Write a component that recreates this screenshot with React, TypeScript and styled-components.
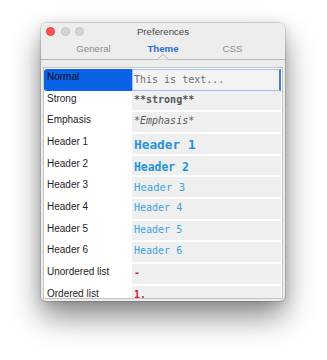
import React from "react";
import styled, { createGlobalStyle, css } from "styled-components";

const Global = createGlobalStyle`
  html, body { margin: 0; padding: 0; background: #ffffff; }
  body { font-family: "Liberation Sans", Arial, sans-serif; }
`;

const Page = styled.div`
  width: 327px;
  height: 360px;
  padding: 23px 0 0 41px;
  box-sizing: border-box;
`;

const Window = styled.div`
  width: 244px;
  height: 278px;
  border-radius: 5px;
  background: #ececec;
  display: flex;
  flex-direction: column;
  overflow: hidden;
  box-shadow: 0 16px 30px rgba(0, 0, 0, 0.45), 0 2px 12px rgba(0, 0, 0, 0.14),
    0 0 0 0.5px rgba(0, 0, 0, 0.22);
`;

const TitleBar = styled.div`
  height: 17px;
  display: grid;
  grid-template-columns: 1fr auto 1fr;
  align-items: center;
  background: #ededed;
`;

const Lights = styled.div`
  display: flex;
  gap: 5.5px;
  padding-left: 5px;
`;

const Light = styled.span<{ $color: string; $edge: string }>`
  width: 9px;
  height: 9px;
  border-radius: 50%;
  box-sizing: border-box;
  background: ${(p) => p.$color};
  border: 0.5px solid ${(p) => p.$edge};
`;

const Title = styled.div`
  font-size: 9.7px;
  color: #4a4a4a;
  line-height: 17px;
`;

const TabBar = styled.div`
  height: 19px;
  display: flex;
  justify-content: center;
  border-bottom: 1px solid #b9b9b9;
  background: #ededed;
`;

const Tab = styled.div<{ $active?: boolean }>`
  position: relative;
  width: 69.5px;
  text-align: center;
  font-size: 9.7px;
  line-height: 17px;
  color: #8c8c8c;
  ${(p) =>
    p.$active &&
    css`
      color: #2b6ccf;
      font-weight: bold;
    `}
`;

const Caret = styled.svg`
  position: absolute;
  left: 50%;
  bottom: -1px;
  margin-left: -6px;
  display: block;
`;

const Content = styled.div`
  flex: 1;
  padding: 7px 2px 2px 2px;
  display: flex;
  min-height: 0;
`;

const Frame = styled.div`
  flex: 1;
  border: 1px solid #c4c4c4;
  background: #ffffff;
  overflow: hidden;
  padding: 1px 1px 0 0;
`;

const Row = styled.div`
  display: grid;
  grid-template-columns: 88px 1fr;
  height: 21.67px;
`;

const Label = styled.div<{ $selected?: boolean }>`
  font-size: 10px;
  line-height: 15px;
  padding-left: 3px;
  color: #1e1e1e;
  white-space: nowrap;
  ${(p) =>
    p.$selected &&
    css`
      background: #0a62e6;
      border-radius: 3px 0 0 3px;
      color: #0c0c1c;
    `}
`;

type Kind =
  | "normal"
  | "strong"
  | "em"
  | "h1"
  | "h2"
  | "h3"
  | "h4"
  | "list";

const kindStyles: Record<Kind, ReturnType<typeof css>> = {
  normal: css`
    color: #6e6e6e;
    line-height: 15px;
  `,
  strong: css`
    color: #565656;
    font-weight: bold;
  `,
  em: css`
    color: #5a5a5a;
    font-style: italic;
  `,
  h1: css`
    color: #1f93de;
    font-weight: bold;
    font-size: 12.8px;
    line-height: 22px;
  `,
  h2: css`
    color: #1f93de;
    font-weight: bold;
    font-size: 11.4px;
    line-height: 22px;
  `,
  h3: css`
    color: #38a2e2;
    font-size: 10.6px;
    line-height: 20.5px;
  `,
  h4: css`
    color: #3aa3e2;
  `,
  list: css`
    color: #c8282c;
    font-weight: bold;
    line-height: 18px;
  `,
};

const Value = styled.div<{ $kind: Kind; $focused?: boolean }>`
  background: #efefef;
  border-bottom: 2px solid #ffffff;
  padding-left: 2px;
  overflow: hidden;
  white-space: nowrap;
  font-family: "DejaVu Sans Mono", "Liberation Mono", monospace;
  font-size: 10px;
  line-height: 17px;
  box-sizing: border-box;
  ${(p) => kindStyles[p.$kind]}
  ${(p) =>
    p.$focused &&
    css`
      background: #f3f3f3;
      border: 1px solid #9dbfec;
      border-right: 2px solid #3b7fdc;
      padding-left: 1px;
      padding-top: 2px;
    `}
`;

const rows: { label: string; text: string; kind: Kind }[] = [
  { label: "Normal", text: "This is text...", kind: "normal" },
  { label: "Strong", text: "**strong**", kind: "strong" },
  { label: "Emphasis", text: "*Emphasis*", kind: "em" },
  { label: "Header 1", text: "Header 1", kind: "h1" },
  { label: "Header 2", text: "Header 2", kind: "h2" },
  { label: "Header 3", text: "Header 3", kind: "h3" },
  { label: "Header 4", text: "Header 4", kind: "h4" },
  { label: "Header 5", text: "Header 5", kind: "h4" },
  { label: "Header 6", text: "Header 6", kind: "h4" },
  { label: "Unordered list", text: "-", kind: "list" },
  { label: "Ordered list", text: "1.", kind: "list" },
];

export default function App() {
  return (
    <Page>
      <Global />
      <Window>
        <TitleBar>
          <Lights>
            <Light $color="#fc5753" $edge="#de3f3b" />
            <Light $color="#d3d3d3" $edge="#c4c4c4" />
            <Light $color="#d3d3d3" $edge="#c4c4c4" />
          </Lights>
          <Title>Preferences</Title>
          <div />
        </TitleBar>
        <TabBar>
          <Tab>General</Tab>
          <Tab $active>
            Theme
            <Caret width="12" height="6" viewBox="0 0 12 6">
              <polygon points="0,5.5 6,0.5 12,5.5" fill="#ededed" />
              <polyline
                points="0,5.5 6,0.5 12,5.5"
                fill="none"
                stroke="#b9b9b9"
                strokeWidth="1"
              />
            </Caret>
          </Tab>
          <Tab>CSS</Tab>
        </TabBar>
        <Content>
          <Frame>
            {rows.map((r, i) => (
              <Row key={r.label}>
                <Label $selected={i === 0}>{r.label}</Label>
                <Value $kind={r.kind} $focused={i === 0}>
                  {r.text}
                </Value>
              </Row>
            ))}
          </Frame>
        </Content>
      </Window>
    </Page>
  );
}
